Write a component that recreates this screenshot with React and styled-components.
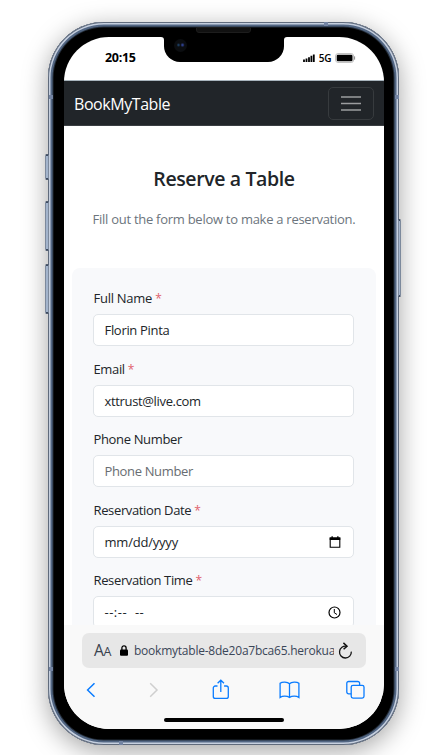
import React from "react";
import styled, { createGlobalStyle } from "styled-components";

const GlobalStyle = createGlobalStyle`
  * { box-sizing: border-box; }
  body { margin: 0; background: #fff; overflow: hidden; font-family: "Open Sans", "Noto Sans", sans-serif; }
`;

const Stage = styled.main`
  width: 440px;
  height: 755px;
  padding: 22px 0 0 48px;
  overflow: hidden;
`;

const Phone = styled.div`
  position: relative;
  width: 351px;
  height: 723px;
  padding: 15px 15px 16px 16px;
  border-radius: 56px;
  background: #000;
  box-shadow:
    inset 0 0 0 1px #606b7c,
    inset 0 0 0 2.5px #c5cfdf,
    inset 0 0 0 4.5px #526683,
    inset 0 0 0 5.5px #232c38,
    0 6px 26px rgba(0, 0, 0, 0.36);
`;

const SideButton = styled.span`
  position: absolute;
  ${(p) => (p.$right ? "right: -2px" : "left: -3px")};
  top: ${(p) => p.$top}px;
  width: ${(p) => (p.$right ? 3 : 4)}px;
  height: ${(p) => p.$height}px;
  border: 1px solid #7c899c;
  border-top: 2px solid #3c4a60;
  border-bottom: 2px solid #3c4a60;
  border-radius: 2px;
  background: #a3b4cc;
`;

const Antenna = styled.span`
  position: absolute;
  left: ${(p) => p.$x}px;
  top: ${(p) => p.$y}px;
  width: 4px;
  height: 4px;
  background: #7384a3;
`;

const Screen = styled.div`
  display: flex;
  flex-direction: column;
  width: 320px;
  height: 692px;
  overflow: hidden;
  border-radius: 45px;
  background: #fff;
`;

const StatusBar = styled.div`
  display: flex;
  flex: none;
  justify-content: space-between;
  height: 43px;
  padding: 12px 28px 0 41px;
`;

const Clock = styled.span`
  font-size: 12.5px;
  font-weight: 700;
  line-height: 17px;
  letter-spacing: -0.3px;
  color: #000;
`;

const Signals = styled.div`
  display: flex;
  align-items: center;
  gap: 4px;
  height: 17px;
  font-size: 10px;
  font-weight: 600;
  letter-spacing: -0.4px;
  color: #000;
`;

const Notch = styled.div`
  position: absolute;
  left: 116px;
  top: 13px;
  width: 120px;
  height: 27px;
  border-radius: 0 0 16px 16px;
  background: #000;
`;

const NotchFlare = styled.svg`
  position: absolute;
  top: 2px;
  ${(p) => (p.$right ? "right: -3px; transform: scaleX(-1)" : "left: -3px")};
`;

const Speaker = styled.span`
  position: absolute;
  left: 32px;
  top: -8px;
  width: 55px;
  height: 6px;
  border: 1px solid #1d1d1d;
  border-radius: 0 0 3px 3px;
  background: #111;
`;

const Camera = styled.span`
  position: absolute;
  left: 10px;
  top: 4px;
  width: 13px;
  height: 13px;
  border-radius: 50%;
  background:
    radial-gradient(circle at 4.5px 6px, #1b3a5c 0, #1b3a5c 0.5px, transparent 2px),
    radial-gradient(circle at 8.5px 6px, #2b47a0 0, #2b3a80 0.7px, transparent 2.2px),
    #0b0d10;
`;

const NavBar = styled.header`
  display: flex;
  flex: none;
  align-items: center;
  justify-content: space-between;
  height: 46px;
  padding: 0 10px 0;
  border-top: 1px solid #a9b5bd;
  border-bottom: 1px solid #3a3e42;
  background: #212529;
`;

const Brand = styled.span`
  padding-top: 2px;
  font-size: 16px;
  line-height: 22px;
  letter-spacing: -0.44px;
  color: #fff;
`;

const Toggler = styled.button`
  display: grid;
  place-items: center;
  width: 46px;
  height: 33px;
  padding: 0;
  border: 1px solid #373b3e;
  border-radius: 5px;
  background: transparent;
`;

const Content = styled.section`
  flex: none;
  height: 499px;
  overflow: hidden;
`;

const Intro = styled.div`
  height: 142px;
  padding-top: 39px;
  text-align: center;
`;

const Title = styled.h1`
  margin: 0;
  font-size: 19.5px;
  font-weight: 600;
  line-height: 28px;
  letter-spacing: -0.38px;
  color: #212529;
`;

const Lead = styled.p`
  margin: 16px 0 0;
  font-size: 13px;
  line-height: 20px;
  letter-spacing: -0.27px;
  white-space: nowrap;
  color: #6c757d;
`;

const FormCard = styled.form`
  display: flex;
  flex-direction: column;
  gap: 15px;
  width: 304px;
  height: 420px;
  margin-left: 8px;
  padding: 20px 22px 0 21px;
  border-radius: 8px;
  background: #f8f9fb;
`;

const Field = styled.div`
  height: 55.5px;
  flex: none;
`;

const Label = styled.label`
  display: block;
  height: 26px;
  padding-left: 0.5px;
  font-size: 13px;
  line-height: 20px;
  letter-spacing: ${(p) => p.$tracking}px;
  color: #212529;
`;

const Required = styled.span`
  font-size: 12px;
  color: #e0606c;
`;

const Control = styled.div`
  display: flex;
  align-items: center;
  justify-content: space-between;
  height: 32px;
  padding: 0 12px 0 10.5px;
  border: 1px solid #e1e5e9;
  border-radius: 5px;
  background: #fff;
  font-size: 13px;
  line-height: 20px;
  letter-spacing: ${(p) => p.$tracking}px;
  white-space: pre;
  color: ${(p) => (p.$placeholder ? "#686d72" : "#212529")};
`;

const BrowserBar = styled.footer`
  flex: 1;
  padding: 8px 18px 0;
  background: #f9f9f9;
`;

const AddressBar = styled.div`
  display: flex;
  align-items: center;
  height: 35px;
  padding: 0 11px 0 12px;
  border-radius: 7px;
  background: #e7e7e7;
`;

const TextSize = styled.span`
  flex: none;
  width: 26px;
  font-size: 15.5px;
  line-height: 20px;
  letter-spacing: -0.3px;
  color: #39424e;
`;

const SmallA = styled.span`
  font-size: 12.5px;
`;

const Url = styled.span`
  flex: none;
  width: 200px;
  margin: 1px 4px 0 6px;
  overflow: hidden;
  font-size: 12px;
  line-height: 20px;
  letter-spacing: -0.23px;
  white-space: nowrap;
  color: #3a4658;
`;

const Toolbar = styled.nav`
  display: grid;
  grid-template-columns: 63px 64px 67px 67px 20px;
  align-items: center;
  height: 24px;
  margin: 10px 0 0 3px;
  color: #0a7cff;
`;

const HomeIndicator = styled.div`
  width: 120px;
  height: 4px;
  margin: 16px auto 0;
  border-radius: 2px;
  background: #000;
`;

const Icon = styled.svg`
  display: block;
  flex: none;
  fill: none;
  stroke: currentColor;
  stroke-width: ${(p) => p.$stroke || 1.3};
`;

const fields = [
  { label: "Full Name", required: true, value: "Florin Pinta", lt: -0.27, vt: -0.31 },
  { label: "Email", required: true, value: "xttrust@live.com", lt: -0.35, vt: -0.34 },
  { label: "Phone Number", value: "Phone Number", placeholder: true, lt: -0.35, vt: -0.35 },
  { label: "Reservation Date", required: true, value: "mm/dd/yyyy", icon: "date", lt: -0.36, vt: -0.21 },
  { label: "Reservation Time", required: true, value: "--:--  --", icon: "time", lt: -0.36, vt: 0.5 },
];

const CalendarIcon = () => (
  <Icon width="12" height="12" viewBox="0 0 12 12" color="#000">
    <path d="M1.2 2h9.6v9.2H1.2z" strokeWidth="1.1" />
    <path d="M.7 1.4h10.6v2.7H.7zM2.5.2h1.3V2H2.5zM8.2.2h1.3V2H8.2z" fill="#000" stroke="none" />
  </Icon>
);

const ClockIcon = () => (
  <Icon width="13" height="13" viewBox="0 0 13 13" color="#000" $stroke={1.2}>
    <circle cx="6.5" cy="6.5" r="5.5" />
    <path d="M6.3 3v3.8l2.7 1.7" strokeWidth="1" />
  </Icon>
);

export default function App() {
  return (
    <>
      <GlobalStyle />
      <Stage>
        <Phone>
          <SideButton $top={132} $height={26} />
          <SideButton $top={179} $height={50} />
          <SideButton $top={242} $height={50} />
          <SideButton $right $top={197} $height={78} />
          <Antenna $x={1} $y={73} />
          <Antenna $x={347} $y={73} />
          <Antenna $x={276} $y={0} />
          <Antenna $x={1} $y={645} />
          <Antenna $x={347} $y={645} />
          <Antenna $x={71} $y={719} />
          <Screen>
            <StatusBar>
              <Clock>20:15</Clock>
              <Signals>
                <Icon width="12" height="8" viewBox="0 0 12 8">
                  <path d="M1 8V5.4M3.5 8V4.6M6 8V3.2M8.4 8V1.8M10.8 8V.4" strokeWidth="1.8" />
                </Icon>
                <span>5G</span>
                <Icon width="21" height="10" viewBox="0 0 21 10" $stroke={1}>
                  <rect x=".6" y=".6" width="18" height="8.8" rx="2.4" stroke="#bdbdbd" />
                  <rect x="1.7" y="1.8" width="15.8" height="6.4" rx="1.2" fill="#000" stroke="none" />
                  <path d="M19.6 3.4v3.2" stroke="#888" />
                </Icon>
              </Signals>
            </StatusBar>
            <NavBar>
              <Brand>BookMyTable</Brand>
              <Toggler aria-label="Toggle navigation">
                <Icon width="20" height="15" viewBox="0 0 20 15" color="#9b9d9f" $stroke={1.5}>
                  <path d="M0 1h20M0 7.5h20M0 14h20" />
                </Icon>
              </Toggler>
            </NavBar>
            <Content>
              <Intro>
                <Title>Reserve a Table</Title>
                <Lead>Fill out the form below to make a reservation.</Lead>
              </Intro>
              <FormCard>
                {fields.map((f) => (
                  <Field key={f.label}>
                    <Label $tracking={f.lt}>
                      {f.label} {f.required && <Required>*</Required>}
                    </Label>
                    <Control $tracking={f.vt} $placeholder={f.placeholder}>
                      <span>{f.value}</span>
                      {f.icon === "date" && <CalendarIcon />}
                      {f.icon === "time" && <ClockIcon />}
                    </Control>
                  </Field>
                ))}
              </FormCard>
            </Content>
            <BrowserBar>
              <AddressBar>
                <TextSize>
                  A<SmallA>A</SmallA>
                </TextSize>
                <Icon width="8" height="11" viewBox="0 0 8 11" color="#000">
                  <rect x="0" y="4.6" width="8" height="6.2" rx="1" fill="#000" stroke="none" />
                  <path d="M1.9 5V2.9a2.1 2.1 0 0 1 4.2 0V5" strokeWidth="1.3" />
                </Icon>
                <Url>bookmytable-8de20a7bca65.herokuapp.com</Url>
                <Icon width="16" height="18" viewBox="0 0 16 18" color="#111">
                  <path d="M8.600 4.300A5.900 5.900 0 1 0 13.300 9.600" />
                  <path d="M5.400.900l3.600 3.300L5.600 7.300" strokeWidth="1.5" />
                </Icon>
              </AddressBar>
              <Toolbar>
                <Icon width="12" height="18" viewBox="0 0 12 18" $stroke={1.5}>
                  <path d="M9.5 2.2L2.6 9l6.9 6.8" />
                </Icon>
                <Icon width="12" height="18" viewBox="0 0 12 18" color="#cfcfcf" $stroke={1.5}>
                  <path d="M2.200 2.200L9 9l-6.800 6.800" />
                </Icon>
                <Icon width="18" height="22" viewBox="0 0 18 22">
                  <path d="M5.500 7H3.300a2 2 0 0 0-2 2v8.400a2 2 0 0 0 2 2h11a2 2 0 0 0 2-2V9a2 2 0 0 0-2-2h-2.200M8.800 13V1.500M5.600 4.300L8.800 1.200 12 4.300" />
                </Icon>
                <Icon width="22" height="20" viewBox="0 0 22 20">
                  <path d="M10.500 3.800C8.500 1.600 3.200 1.500 1.100 3.300v14.200c2.400-1.800 6.900-1.800 9.400 0 2.500-1.800 7-1.800 9.400 0V3.300C17.800 1.500 12.500 1.600 10.500 3.800zM10.500 3.800v13.500" />
                </Icon>
                <Icon width="20" height="20" viewBox="0 0 20 20">
                  <rect x="5.200" y="5.300" width="12.800" height="12.800" rx="1.800" />
                  <path d="M5.200 13.900H2.600a1.800 1.800 0 0 1-1.800-1.800V3.300A1.800 1.800 0 0 1 2.600 1.500h9.200A1.800 1.800 0 0 1 13.600 3.300v1.900" />
                </Icon>
              </Toolbar>
              <HomeIndicator />
            </BrowserBar>
          </Screen>
          <Notch>
            <NotchFlare width="3" height="3" viewBox="0 0 3 3">
              <path d="M0 0h3v3a3 3 0 0 0-3-3z" />
            </NotchFlare>
            <NotchFlare $right width="3" height="3" viewBox="0 0 3 3">
              <path d="M0 0h3v3a3 3 0 0 0-3-3z" />
            </NotchFlare>
            <Speaker />
            <Camera />
          </Notch>
        </Phone>
      </Stage>
    </>
  );
}
